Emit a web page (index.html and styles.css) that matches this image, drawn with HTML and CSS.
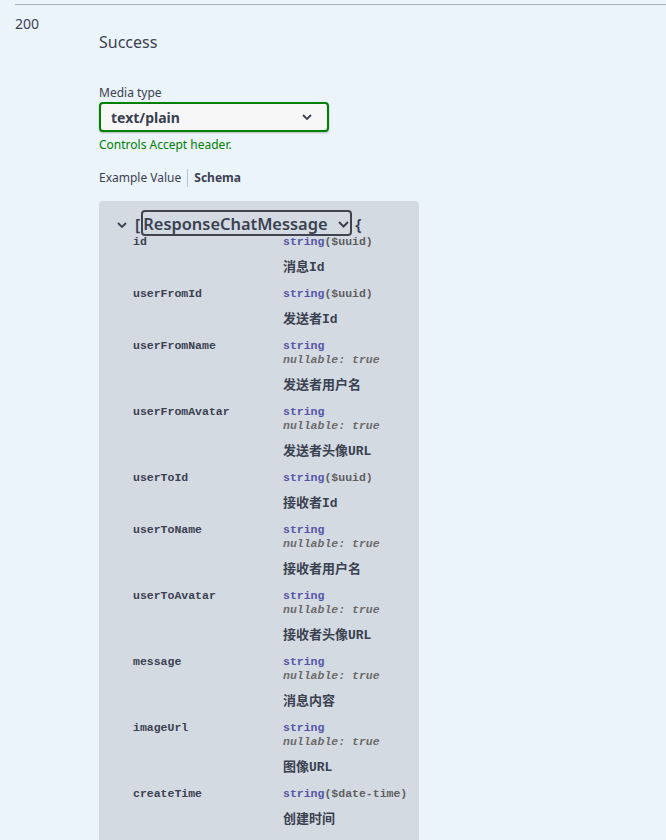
FILE: index.html
```html
<!DOCTYPE html>
<html lang="zh">
<head>
<meta charset="utf-8">
<title>Responses</title>
<link rel="stylesheet" href="styles.css">
</head>
<body>
<div class="page">
  <div class="divider"></div>
  <div class="response">
    <div class="status">200</div>
    <div class="col">
      <div class="success">Success</div>
      <div class="media-label">Media type</div>
      <div class="select">
        <span>text/plain</span>
        <svg class="chev" width="10" height="6" viewBox="0 0 10 6"><polyline points="1,1 5,5 9,1" fill="none" stroke="#3b4151" stroke-width="1.8"/></svg>
      </div>
      <div class="controls">Controls Accept header.</div>
      <div class="tabs">
        <span class="tab">Example Value</span>
        <span class="sep"></span>
        <span class="tab active">Schema</span>
      </div>
      <div class="model-box">
        <div class="model-head">
          <svg class="chev head-chev" width="10" height="6" viewBox="0 0 10 6"><polyline points="1,1 5,5 9,1" fill="none" stroke="#3b4151" stroke-width="1.8"/></svg>
          <span class="brace">[</span>
          <span class="title-btn">ResponseChatMessage<svg class="chev btn-chev" width="11" height="7" viewBox="0 0 11 7"><polyline points="1,1 5.5,5.5 10,1" fill="none" stroke="#3b4151" stroke-width="2"/></svg></span>
          <span class="brace brace-open">{</span>
        </div>
        <div class="props">
          <div class="row"><div class="name">id</div><div class="info"><div class="type"><span class="t">string</span><span class="fmt">($uuid)</span></div><div class="desc">消息Id</div></div></div>
          <div class="row"><div class="name">userFromId</div><div class="info"><div class="type"><span class="t">string</span><span class="fmt">($uuid)</span></div><div class="desc">发送者Id</div></div></div>
          <div class="row"><div class="name">userFromName</div><div class="info"><div class="type"><span class="t">string</span></div><div class="nullable">nullable: true</div><div class="desc">发送者用户名</div></div></div>
          <div class="row"><div class="name">userFromAvatar</div><div class="info"><div class="type"><span class="t">string</span></div><div class="nullable">nullable: true</div><div class="desc">发送者头像URL</div></div></div>
          <div class="row"><div class="name">userToId</div><div class="info"><div class="type"><span class="t">string</span><span class="fmt">($uuid)</span></div><div class="desc">接收者Id</div></div></div>
          <div class="row"><div class="name">userToName</div><div class="info"><div class="type"><span class="t">string</span></div><div class="nullable">nullable: true</div><div class="desc">接收者用户名</div></div></div>
          <div class="row"><div class="name">userToAvatar</div><div class="info"><div class="type"><span class="t">string</span></div><div class="nullable">nullable: true</div><div class="desc">接收者头像URL</div></div></div>
          <div class="row"><div class="name">message</div><div class="info"><div class="type"><span class="t">string</span></div><div class="nullable">nullable: true</div><div class="desc">消息内容</div></div></div>
          <div class="row"><div class="name">imageUrl</div><div class="info"><div class="type"><span class="t">string</span></div><div class="nullable">nullable: true</div><div class="desc">图像URL</div></div></div>
          <div class="row"><div class="name">createTime</div><div class="info"><div class="type"><span class="t">string</span><span class="fmt">($date-time)</span></div><div class="desc">创建时间</div></div></div>
        </div>
      </div>
    </div>
  </div>
</div>
</body>
</html>
```

FILE: styles.css
```css
html, body {
  margin: 0;
  padding: 0;
  background: #ebf3fb;
  height: 100%;
  overflow: hidden;
}

.page {
  padding-top: 4px;
  font-family: "Noto Sans", "Open Sans", "Noto Sans CJK SC", sans-serif;
  color: #3b4151;
}

.divider {
  margin-left: 15px;
  border-top: 1px solid #acb2bd;
}

.response {
  display: flex;
  padding-left: 15px;
}

.status {
  width: 84px;
  font-size: 14px;
  line-height: 20px;
  margin-top: 9px;
}

.col {
  display: flex;
  flex-direction: column;
  align-items: flex-start;
}

.success {
  font-size: 16px;
  line-height: 22px;
  margin-top: 26px;
}

.media-label {
  font-size: 12px;
  line-height: 16px;
  margin-top: 32px;
}

.select {
  box-sizing: border-box;
  width: 230px;
  height: 30px;
  margin-top: 1px;
  border: 2px solid #008000;
  border-radius: 4px;
  background: #f7f7f7;
  display: flex;
  align-items: center;
  justify-content: space-between;
  padding: 0 15px 0 10px;
  font-size: 14px;
  font-weight: 700;
  box-shadow: 0 1px 2px rgba(0, 0, 0, 0.25);
}

.chev {
  display: block;
}

.controls {
  font-size: 12px;
  line-height: 16px;
  color: #008000;
  margin-top: 5px;
}

.tabs {
  display: flex;
  align-items: center;
  margin-top: 16px;
  font-size: 12px;
  line-height: 16px;
}

.tab {
  color: #3b4151;
}

.tab.active {
  font-weight: 700;
}

.sep {
  width: 1px;
  height: 18px;
  background: rgba(0, 0, 0, 0.2);
  margin: 0 6px 0 6px;
}

.model-box {
  box-sizing: border-box;
  width: 320px;
  margin-top: 14px;
  background: rgba(0, 0, 0, 0.1);
  border-radius: 4px;
  padding: 9px 10px 20px 34px;
}

.model-head {
  display: flex;
  align-items: flex-start;
  height: 25px;
  margin-left: -16px;
}

.head-chev {
  margin-top: 12px;
  margin-right: 8px;
}

.brace {
  font-size: 16px;
  line-height: 20px;
  margin-top: 5px;
  font-weight: 600;
}

.title-btn {
  box-sizing: border-box;
  height: 26px;
  width: 211px;
  margin-left: 1px;
  border: 2px solid #41444e;
  border-radius: 4px;
  display: flex;
  align-items: center;
  font-size: 16.4px;
  font-weight: 600;
  color: #3b4151;
  padding-left: 0;
}

.btn-chev {
  margin-left: auto;
  margin-right: 1px;
  margin-top: 2px;
}

.brace-open {
  margin-left: 3px;
  color: #3b3b5c;
}

.props {
  font-family: "Liberation Mono", "Noto Sans CJK SC", monospace;
  font-size: 11.5px;
  font-weight: 700;
}

.row {
  display: flex;
  padding-bottom: 12px;
}

.name {
  width: 150px;
  flex: none;
  line-height: 14px;
  color: #3b4151;
}

.info {
  line-height: 14px;
}

.type .t {
  color: #55a;
}

.type .fmt {
  color: #606060;
}

.nullable {
  color: #6b6b6b;
  font-style: italic;
}

.desc {
  margin-top: 12px;
  font-size: 13px;
  font-weight: 700;
  color: #3b4151;
}
```
